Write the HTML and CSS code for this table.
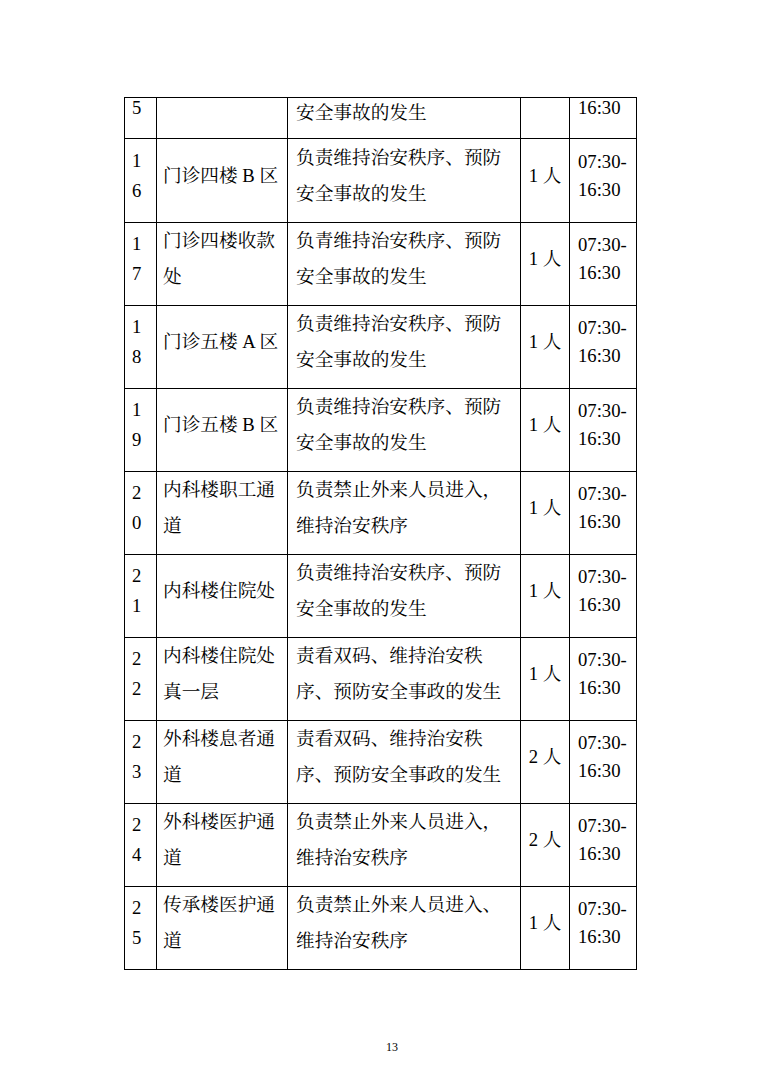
FILE: index.html
```html
<!DOCTYPE html>
<html lang="zh-CN">
<head>
<meta charset="utf-8">
<title>13</title>
<link rel="stylesheet" href="styles.css">
</head>
<body>
<div class="page">
  <table class="duty">
    <colgroup>
      <col class="c1"><col class="c2"><col class="c3"><col class="c4"><col class="c5">
    </colgroup>
    <tbody>
      <tr class="r-first">
        <td class="num top">5</td>
        <td class="place"></td>
        <td class="task">安全事故的发生</td>
        <td class="cnt"></td>
        <td class="time top">16:30</td>
      </tr>
      <tr class="r84">
        <td class="num">1<br>6</td>
        <td class="place">门诊四楼 B 区</td>
        <td class="task">负责维持治安秩序、预防<br>安全事故的发生</td>
        <td class="cnt">1 人</td>
        <td class="time">07:30-<br>16:30</td>
      </tr>
      <tr>
        <td class="num">1<br>7</td>
        <td class="place">门诊四楼收款<br>处</td>
        <td class="task">负青维持治安秩序、预防<br>安全事故的发生</td>
        <td class="cnt">1 人</td>
        <td class="time">07:30-<br>16:30</td>
      </tr>
      <tr>
        <td class="num">1<br>8</td>
        <td class="place">门诊五楼 A 区</td>
        <td class="task">负责维持治安秩序、预防<br>安全事故的发生</td>
        <td class="cnt">1 人</td>
        <td class="time">07:30-<br>16:30</td>
      </tr>
      <tr>
        <td class="num">1<br>9</td>
        <td class="place">门诊五楼 B 区</td>
        <td class="task">负责维持治安秩序、预防<br>安全事故的发生</td>
        <td class="cnt">1 人</td>
        <td class="time">07:30-<br>16:30</td>
      </tr>
      <tr>
        <td class="num">2<br>0</td>
        <td class="place">内科楼职工通<br>道</td>
        <td class="task">负责禁止外来人员进入，<br>维持治安秩序</td>
        <td class="cnt">1 人</td>
        <td class="time">07:30-<br>16:30</td>
      </tr>
      <tr>
        <td class="num">2<br>1</td>
        <td class="place">内科楼住院处</td>
        <td class="task">负责维持治安秩序、预防<br>安全事故的发生</td>
        <td class="cnt">1 人</td>
        <td class="time">07:30-<br>16:30</td>
      </tr>
      <tr>
        <td class="num">2<br>2</td>
        <td class="place">内科楼住院处<br>真一层</td>
        <td class="task">责看双码、维持治安秩<br>序、预防安全事政的发生</td>
        <td class="cnt">1 人</td>
        <td class="time">07:30-<br>16:30</td>
      </tr>
      <tr>
        <td class="num">2<br>3</td>
        <td class="place">外科楼息者通<br>道</td>
        <td class="task">责看双码、维持治安秩<br>序、预防安全事政的发生</td>
        <td class="cnt">2 人</td>
        <td class="time">07:30-<br>16:30</td>
      </tr>
      <tr>
        <td class="num">2<br>4</td>
        <td class="place">外科楼医护通<br>道</td>
        <td class="task">负责禁止外来人员进入，<br>维持治安秩序</td>
        <td class="cnt">2 人</td>
        <td class="time">07:30-<br>16:30</td>
      </tr>
      <tr>
        <td class="num">2<br>5</td>
        <td class="place">传承楼医护通<br>道</td>
        <td class="task">负责禁止外来人员进入、<br>维持治安秩序</td>
        <td class="cnt">1 人</td>
        <td class="time">07:30-<br>16:30</td>
      </tr>
    </tbody>
  </table>
  <div class="folio">13</div>
</div>
</body>
</html>
```
FILE: styles.css
```css
html, body {
  margin: 0;
  padding: 0;
  background: #fff;
}
.page {
  width: 761px;
  height: 1077px;
  box-sizing: border-box;
  padding: 97px 0 0 124px;
  font-family: "Liberation Serif", "Noto Serif CJK SC", "Noto Sans CJK SC", serif;
  color: #000;
}
.duty {
  border-collapse: collapse;
  table-layout: fixed;
  width: 512px;
}
.c1 { width: 32px; }
.c2 { width: 131px; }
.c3 { width: 233px; }
.c4 { width: 49px; }
.c5 { width: 67px; }
.duty tr { height: 83px; }
.duty tr.r-first { height: 41px; }
.duty tr.r84 { height: 84px; }
.duty td {
  border: 1px solid #000;
  padding: 0 4px 10px 7px;
  vertical-align: middle;
  font-size: 18.67px;
  line-height: 36px;
  white-space: nowrap;
  overflow: hidden;
}
.duty td.num { line-height: 30px; padding-left: 7px; }
.duty td.place { padding-left: 6px; }
.duty td.task { padding-left: 8px; }
.duty td.cnt { text-align: center; padding-left: 0; padding-right: 0; }
.duty td.time { line-height: 28px; padding-left: 8px; }
.duty tr.r-first td { line-height: 30px; padding-bottom: 10px; }
.duty tr.r-first td.top { line-height: 20px; padding-bottom: 20px; }
.folio {
  width: 512px;
  margin-top: 70px;
  padding-left: 24px;
  box-sizing: border-box;
  text-align: center;
  font-size: 12px;
  line-height: 14px;
}
```
